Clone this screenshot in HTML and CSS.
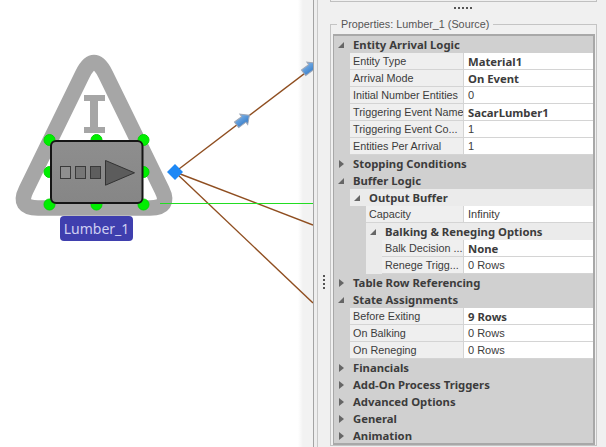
FILE: index.html
```html
<!DOCTYPE html>
<html>

<head>
  <meta charset="utf-8">
  <title>Properties: Lumber_1 (Source)</title>
  <link rel="stylesheet" href="styles.css">
</head>

<body>
  <div class="app">

    <div class="canvas">
      <svg class="facility" width="313" height="447" viewBox="0 0 313 447">
        <defs>
          <linearGradient id="boxFill" x1="0" y1="0" x2="0" y2="1">
            <stop offset="0" stop-color="#8e8e8e"/>
            <stop offset="1" stop-color="#868686"/>
          </linearGradient>
          <linearGradient id="arrowFill" x1="0" y1="0" x2="0" y2="1">
            <stop offset="0" stop-color="#7db4ea"/>
            <stop offset="1" stop-color="#2f76c4"/>
          </linearGradient>
          <g id="pathArrow">
            <path d="M-8 -3.5 L1 -3.5 L1 -6.5 L8 0 L1 6.5 L1 3.5 L-8 3.5 Z" fill="url(#arrowFill)" stroke="#9fa8b8" stroke-width="1"/>
          </g>
        </defs>

        <!-- source symbol -->
        <path d="M82.3 74.6 Q94 50.6 105.7 74.6 L162 190 Q171 208 150 208 L38 208 Q17 208 26 190 Z" fill="none" stroke="#a6a6a6" stroke-width="15.5"/>
        <path d="M84 95 H105 V101 H98 V127 H105 V133 H84 V127 H90 V101 H84 Z" fill="#a6a6a6"/>

        <!-- paths out of the output node -->
        <line x1="175" y1="172" x2="313" y2="67" class="path-line"/>
        <line x1="175" y1="172" x2="313" y2="225" class="path-line"/>
        <line x1="175" y1="172" x2="313" y2="303" class="path-line"/>
        <line x1="160" y1="203.5" x2="313" y2="203.5" class="ground-line"/>
        <use href="#pathArrow" transform="translate(243 120) rotate(-37)"/>
        <use href="#pathArrow" transform="translate(310 68) rotate(-37)"/>

        <!-- selection handles -->
        <g fill="#00ee00" stroke="#00d800" stroke-width="1">
          <circle cx="49.5" cy="140" r="5.5"/>
          <circle cx="96.5" cy="140" r="5.5"/>
          <circle cx="143.5" cy="140" r="5.5"/>
          <circle cx="49.5" cy="172" r="5.5"/>
          <circle cx="143.5" cy="172" r="5.5"/>
          <circle cx="49.5" cy="204.5" r="5.5"/>
          <circle cx="96.5" cy="204.5" r="5.5"/>
          <circle cx="143.5" cy="204.5" r="5.5"/>
        </g>

        <rect x="51" y="141" width="91.5" height="62" rx="5" fill="url(#boxFill)" stroke="#151515" stroke-width="2"/>
        <rect x="60.5" y="166.5" width="10" height="12" fill="#8f8f8f" stroke="#3a3a3a"/>
        <rect x="75.5" y="166.5" width="10" height="12" fill="#767676" stroke="#3a3a3a"/>
        <rect x="90.5" y="166.5" width="10" height="12" fill="#5e5e5e" stroke="#3a3a3a"/>
        <path d="M105.5 160.5 L134.5 172.8 L105.5 185.2 Z" fill="#5c5c5c" stroke="#333"/>

        <path d="M175 164 L183 172 L175 180 L167 172 Z" fill="#1e88f5"/>
      </svg>
      <div class="node-label">Lumber_1</div>
    </div>

    <div class="splitter"></div>

    <div class="side">
      <div class="side-top"></div>
      <div class="grip-h"><i></i><i></i><i></i><i></i><i></i></div>
      <div class="grip-v"><i></i><i></i><i></i><i></i></div>

      <fieldset class="props">
        <legend>Properties: Lumber_1 (Source)</legend>
        <div class="grid">

          <div class="head"><span class="open"></span>Entity Arrival Logic</div>
          <div class="body">
            <div class="row"><div class="name">Entity Type</div><div class="val strong">Material1</div></div>
            <div class="row"><div class="name">Arrival Mode</div><div class="val strong">On Event</div></div>
            <div class="row"><div class="name">Initial Number Entities</div><div class="val">0</div></div>
            <div class="row"><div class="name">Triggering Event Name</div><div class="val strong">SacarLumber1</div></div>
            <div class="row"><div class="name">Triggering Event Co...</div><div class="val">1</div></div>
            <div class="row"><div class="name">Entities Per Arrival</div><div class="val">1</div></div>
          </div>

          <div class="head"><span class="shut"></span>Stopping Conditions</div>

          <div class="head"><span class="open"></span>Buffer Logic</div>
          <div class="body">
            <div class="head sub"><span class="open"></span>Output Buffer</div>
            <div class="body sub-body">
              <div class="row"><div class="name">Capacity</div><div class="val">Infinity</div></div>
              <div class="head sub"><span class="open"></span>Balking &amp; Reneging Options</div>
              <div class="body sub-body">
                <div class="row"><div class="name">Balk Decision ...</div><div class="val strong">None</div></div>
                <div class="row"><div class="name">Renege Trigg...</div><div class="val">0 Rows</div></div>
              </div>
            </div>
          </div>

          <div class="head"><span class="shut"></span>Table Row Referencing</div>

          <div class="head"><span class="open"></span>State Assignments</div>
          <div class="body">
            <div class="row"><div class="name">Before Exiting</div><div class="val strong">9 Rows</div></div>
            <div class="row"><div class="name">On Balking</div><div class="val">0 Rows</div></div>
            <div class="row"><div class="name">On Reneging</div><div class="val">0 Rows</div></div>
          </div>

          <div class="head"><span class="shut"></span>Financials</div>
          <div class="head"><span class="shut"></span>Add-On Process Triggers</div>
          <div class="head"><span class="shut"></span>Advanced Options</div>
          <div class="head"><span class="shut"></span>General</div>
          <div class="head"><span class="shut"></span>Animation</div>

        </div>
      </fieldset>
    </div>

  </div>
</body>

</html>
```

FILE: styles.css
```css
html,
body {
  margin: 0;
  padding: 0;
  height: 100%;
  overflow: hidden;
}

body {
  font-family: "Liberation Sans", Arial, sans-serif;
  font-size: 11px;
  color: #3c3c3c;
  background-color: #f0f0f0;
}

.app {
  display: flex;
  width: 606px;
  height: 447px;
  overflow: hidden;
}

/* facility view */
.canvas {
  position: relative;
  flex: 0 0 313px;
  height: 447px;
  background: linear-gradient(to right, #fff 298px, #f2f2f2 303px);
}

.facility {
  display: block;
}

.path-line {
  stroke: #8f4e20;
  stroke-width: 1.4;
}

.ground-line {
  stroke: #22dd22;
  stroke-width: 1;
}

.node-label {
  position: absolute;
  left: 60px;
  top: 216px;
  width: 73px;
  height: 25px;
  line-height: 25px;
  text-align: center;
  font-family: "Noto Sans", sans-serif;
  font-size: 14px;
  color: #cfcff2;
  background-color: #3f3fae;
  border-radius: 4px;
}

.splitter {
  flex: 0 0 3px;
  border-left: 1px solid #a4a4a4;
  border-right: 1px solid #c8c8c8;
  background-color: #eee;
}

/* right panel */
.side {
  position: relative;
  flex: 0 0 288px;
  width: 288px;
  box-sizing: border-box;
  padding-left: 12px;
  padding-right: 9px;
  background-color: #f0f0f0;
}

.side-top {
  height: 1px;
  border: 1px solid #c0c0c0;
  border-top: none;
}

.grip-h {
  position: absolute;
  left: 136px;
  top: 7px;
  display: flex;
  gap: 2px;
}

.grip-h i {
  width: 2px;
  height: 2px;
  background-color: #555;
}

.grip-v {
  position: absolute;
  left: 5px;
  top: 275px;
  display: flex;
  flex-direction: column;
  gap: 2px;
}

.grip-v i {
  width: 2px;
  height: 2px;
  background-color: #555;
}

.props {
  margin: 14px 0 0 0;
  padding: 0 1px 0 2px;
  border: 1px solid #c4c4c4;
  min-width: 0;
}

.props legend {
  margin-left: 4px;
  padding: 0 4px;
  font-size: 10.8px;
  line-height: 16px;
  color: #555;
}

.grid {
  height: 411px;
  box-sizing: border-box;
  overflow: hidden;
  margin-top: 2px;
  border: solid #a8a8a8;
  border-width: 2px 2px 2px 1px;
  background-color: #d0d0d0;
}

/* a section title, and the rows it opens */
.head {
  display: flex;
  align-items: center;
  height: 17px;
  font-family: "Noto Sans", sans-serif;
  font-size: 11.3px;
  font-weight: bold;
  white-space: nowrap;
}

.head span {
  flex: 0 0 19px;
  width: 19px;
  height: 8px;
  position: relative;
}

.head .open::before {
  content: "";
  position: absolute;
  left: 4px;
  top: 1px;
  border-style: solid;
  border-width: 0 0 6px 6px;
  border-color: transparent transparent #666 transparent;
}

.head .shut::before {
  content: "";
  position: absolute;
  left: 5px;
  top: 0;
  border-style: solid;
  border-width: 4px 0 4px 5px;
  border-color: transparent transparent transparent #666;
}

.body {
  margin-left: 16px;
}

.sub,
.sub-body {
  background-color: #ebebeb;
}

.row {
  display: flex;
  height: 17px;
  box-sizing: border-box;
  border-bottom: 1px solid #d4d4d4;
}

.name {
  flex: 1;
  min-width: 0;
  padding-left: 3px;
  font-size: 10.8px;
  line-height: 16px;
  white-space: nowrap;
  overflow: hidden;
  background-color: #efefef;
  border-right: 1px solid #d4d4d4;
}

.val {
  flex: 0 0 129px;
  padding-left: 4px;
  box-sizing: border-box;
  line-height: 17px;
  white-space: nowrap;
  background-color: #fff;
}

.strong {
  font-family: "Noto Sans", sans-serif;
  font-size: 11.3px;
  font-weight: bold;
}
```
